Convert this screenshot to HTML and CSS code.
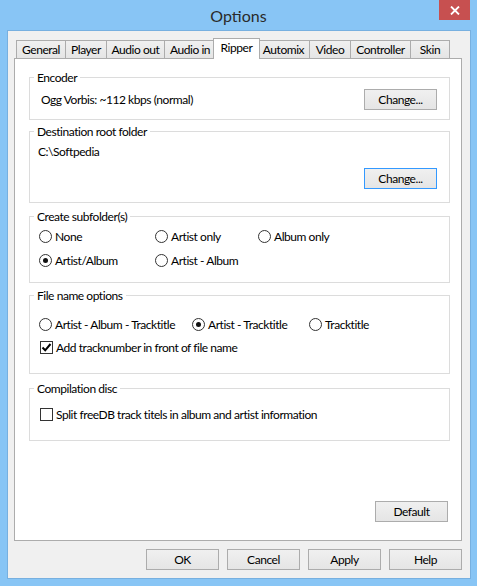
FILE: index.html
```html
<!doctype html>
<html>
  <head>
    <title>Options</title>
    <link rel="stylesheet" href="styles.css">
  </head>
  <body>
    <div class="window">
      <div class="titlebar">
        <span class="title">Options</span>
        <span class="close"><svg width="10" height="9" viewBox="0 0 10 9"><path d="M1 0.5 L9 8.5 M9 0.5 L1 8.5" stroke="#fff" stroke-width="1.8"/></svg></span>
      </div>
      <div class="client">
        <div class="tabs">
          <span class="tab t-general">General</span>
          <span class="tab t-player">Player</span>
          <span class="tab t-audioout">Audio out</span>
          <span class="tab t-audioin">Audio in</span>
          <span class="tab t-ripper selected">Ripper</span>
          <span class="tab t-automix">Automix</span>
          <span class="tab t-video">Video</span>
          <span class="tab t-controller">Controller</span>
          <span class="tab t-skin">Skin</span>
        </div>
        <div class="panel">
          <fieldset class="group encoder">
            <legend>Encoder</legend>
            <div class="body">
              <span class="enc-text">Ogg Vorbis: ~112 kbps (normal)</span>
              <button class="btn">Change...</button>
            </div>
          </fieldset>

          <fieldset class="group dest">
            <legend>Destination root folder</legend>
            <div class="body">
              <span class="line">C:\Softpedia</span>
              <button class="btn focus">Change...</button>
            </div>
          </fieldset>

          <fieldset class="group subfolder">
            <legend>Create subfolder(s)</legend>
            <div class="body">
              <label class="opt"><span class="radio"></span>None</label>
              <label class="opt"><span class="radio"></span>Artist only</label>
              <label class="opt"><span class="radio"></span>Album only</label>
              <label class="opt"><span class="radio on"></span>Artist/Album</label>
              <label class="opt"><span class="radio"></span>Artist - Album</label>
            </div>
          </fieldset>

          <fieldset class="group filename">
            <legend>File name options</legend>
            <div class="body">
              <label class="opt"><span class="radio"></span>Artist - Album - Tracktitle</label>
              <label class="opt"><span class="radio on"></span>Artist - Tracktitle</label>
              <label class="opt"><span class="radio"></span>Tracktitle</label>
              <label class="opt wide"><span class="check"><svg width="11" height="11" viewBox="0 0 11 11"><path d="M1.5 5.5 L4.2 8.3 L9.5 2" fill="none" stroke="#000" stroke-width="2"/></svg></span>Add tracknumber in front of file name</label>
            </div>
          </fieldset>

          <fieldset class="group compilation">
            <legend>Compilation disc</legend>
            <div class="body">
              <label class="opt"><span class="check"></span>Split freeDB track titels in album and artist information</label>
            </div>
          </fieldset>

          <div class="panel-foot">
            <button class="btn">Default</button>
          </div>
        </div>
        <div class="dialog-buttons">
          <button class="btn">OK</button>
          <button class="btn">Cancel</button>
          <button class="btn">Apply</button>
          <button class="btn">Help</button>
        </div>
      </div>
    </div>
  </body>
</html>
```

FILE: styles.css
```css
body {
  margin: 0;
  background: #88c5f5;
  font-family: Lato, "Noto Sans", sans-serif;
  font-size: 12px;
  letter-spacing: -0.45px;
  color: #000;
}

.window {
  width: 477px;
  height: 586px;
}

.titlebar {
  position: relative;
  height: 30px;
  display: flex;
  justify-content: center;
  align-items: center;
}
.title {
  font-size: 16px;
  letter-spacing: 0;
  color: #2a2a2a;
  margin-top: 1px;
}
.close {
  position: absolute;
  top: 0;
  right: 7px;
  width: 31px;
  height: 20px;
  background: #c75050;
  display: flex;
  justify-content: center;
  align-items: center;
}

.client {
  margin: 0 6px 0 7px;
  border: 1px solid #77b0e0;
  background: #f0f0f0;
  padding-top: 7px;
  height: 540px;
}

/* tabs */
.tabs {
  display: flex;
  align-items: flex-end;
  height: 20px;
  margin-left: 8px;
}
.tab {
  height: 18px;
  box-sizing: border-box;
  border: 1px solid #acacac;
  border-bottom: 0;
  margin-left: -1px;
  background: linear-gradient(#f0f0f0, #e5e5e5);
  line-height: 18px;
  text-align: center;
  white-space: nowrap;
}
.tab:first-child {
  margin-left: 0;
}
.tab.selected {
  position: relative;
  z-index: 1;
  height: 21px;
  margin: 0 -2px -1px -3px;
  background: #fff;
  line-height: 17px;
}
.t-general { width: 50px; }
.t-player { width: 42px; }
.t-audioout { width: 59px; }
.t-audioin { width: 52px; }
.t-ripper { width: 47px; }
.t-automix { width: 53px; }
.t-video { width: 42px; }
.t-controller { width: 61px; }
.t-skin { width: 40px; }

.panel {
  margin: 0 8px 0 6px;
  height: 483px;
  box-sizing: border-box;
  border: 1px solid #acacac;
  background: #fff;
  display: flex;
  flex-direction: column;
}

/* group boxes */
.group {
  margin: 0 11px 0 14px;
  padding: 0;
  border: 1px solid #dcdcdc;
  min-width: 0;
}
.group legend {
  margin-left: 4px;
  padding: 0 3px;
  line-height: 15px;
}
.encoder { margin-top: 11px; }
.dest { margin-top: 4px; }
.subfolder { margin-top: 6px; }
.filename { margin-top: 5px; }
.compilation { margin-top: 7px; }

.encoder .body {
  display: flex;
  justify-content: space-between;
  align-items: center;
  padding: 4px 12px 9px 11px;
}
.dest .body {
  display: flex;
  flex-direction: column;
  padding: 5px 12px 13px 8px;
}
.dest .line {
  line-height: 16px;
}
.dest .btn {
  align-self: flex-end;
  margin-top: 8px;
}

.subfolder .body {
  display: grid;
  grid-template-columns: 116px 103px auto;
  row-gap: 8px;
  padding: 4px 8px 14px 9px;
}
.filename .body {
  display: grid;
  grid-template-columns: 153px 117px auto;
  row-gap: 7px;
  padding: 13px 8px 18px 9px;
}
.filename .wide {
  grid-column: 1 / 4;
  padding-left: 1px;
}
.compilation .body {
  padding: 10px 8px 18px 10px;
}

.opt {
  display: flex;
  align-items: center;
  height: 16px;
  white-space: nowrap;
}
.radio {
  width: 13px;
  height: 13px;
  box-sizing: border-box;
  border: 1px solid #333;
  border-radius: 50%;
  background: #fff;
  margin-right: 3px;
  display: flex;
  justify-content: center;
  align-items: center;
}
.radio.on::after {
  content: "";
  width: 5px;
  height: 5px;
  border-radius: 50%;
  background: #111;
}
.check {
  width: 13px;
  height: 13px;
  box-sizing: border-box;
  border: 1px solid #333;
  background: #fff;
  margin-right: 3px;
  display: flex;
  justify-content: center;
  align-items: center;
}

/* buttons */
.btn {
  width: 73px;
  height: 21px;
  padding: 0;
  border: 1px solid #acacac;
  background: linear-gradient(#f0f0f0, #e5e5e5);
  font-family: inherit;
  font-size: 12px;
  letter-spacing: inherit;
  color: #000;
}
.btn.focus {
  border-color: #3399ff;
}

.panel-foot {
  margin-top: auto;
  display: flex;
  justify-content: flex-end;
  padding: 0 13px 18px 0;
}

.dialog-buttons {
  display: flex;
  justify-content: flex-end;
  gap: 8px;
  margin: 8px 8px 0 0;
}
```
